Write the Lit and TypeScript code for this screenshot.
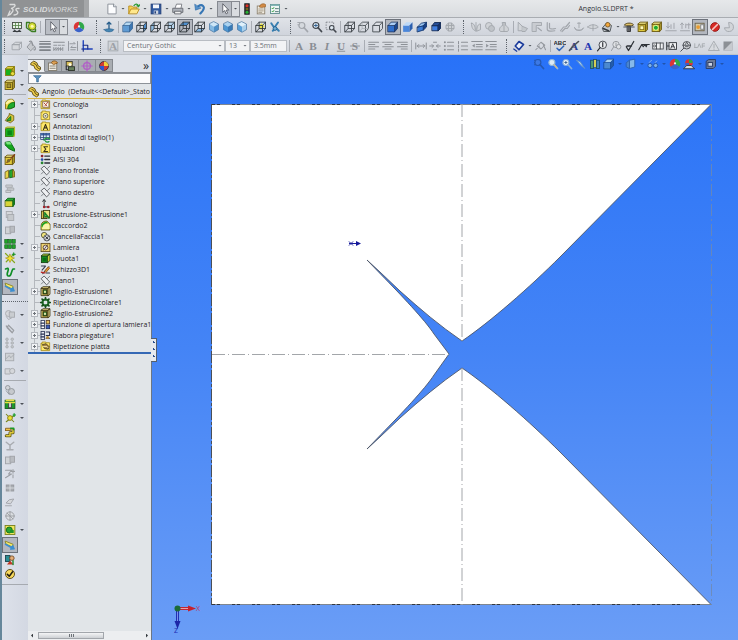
import { LitElement, html, svg, css, nothing, type SVGTemplateResult } from "lit";
import { customElement, property, state } from "lit/decorators.js";
import { classMap } from "lit/directives/class-map.js";

/* ---------- icon drawing helpers (16 x 16 grid) ---------- */

const p = (d: string, fill = "none", stroke = "none", w = 1.2) =>
  svg`<path d=${d} fill=${fill} stroke=${stroke} stroke-width=${w} stroke-linejoin="round" stroke-linecap="round"/>`;
const c = (x: number, y: number, r: number, fill = "none", stroke = "none", w = 1.2) =>
  svg`<circle cx=${x} cy=${y} r=${r} fill=${fill} stroke=${stroke} stroke-width=${w}/>`;
const r = (x: number, y: number, w: number, h: number, fill = "none", stroke = "none", sw = 1.2) =>
  svg`<rect x=${x} y=${y} width=${w} height=${h} fill=${fill} stroke=${stroke} stroke-width=${sw}/>`;

const FRONT = "M1.5 6H10V14.5H1.5Z";
const WIRE = "M1.5 6H10V14.5H1.5ZM1.5 6L5.5 1.5H14L10 6M14 1.5V10L10 14.5M5.5 1.5V10H14M5.5 10L1.5 14.5";
const OUTLINE = "M1.5 6H10V14.5H1.5ZM1.5 6L5.5 1.5H14L10 6M14 1.5V10L10 14.5";
const TOPF = "M1.5 6L5.5 1.5H14L10 6Z";
const SIDE = "M10 6L14 1.5V10L10 14.5Z";
const INK = "#2b3136";
const GREY = "#a2a6ac";

const wire = (face: string, fill: string) => svg`${p(face, fill)}${p(WIRE, "none", INK, 1.1)}`;
const solid = (f: string, t: string, s: string, line: string) =>
  svg`${p(FRONT, f)}${p(TOPF, t)}${p(SIDE, s)}${p(OUTLINE, "none", line, 1)}`;
const iso = (t: string, l: string, q: string) =>
  svg`${p("M8 1L14 4L8 7.500L2 4Z", t)}${p("M2 4L8 7.500V15L2 11.500Z", l)}${p("M14 4L8 7.500V15L14 11.500Z", q)}${p("M8 1L14 4V11.500L8 15L2 11.500V4Z", "none", "#3f6f9c", 0.9)}`;
const lens = (col: string, fill: string) => svg`${c(6.5, 6, 4, fill, col, 1.6)}${p("M9.500 9L14 14", "none", col, 2.4)}`;
const lines = (col: string, ls: number[][]) => svg`${ls.map(([y, a, b]) => p(`M${a} ${y}H${b}`, "none", col, 1.500))}`;
const glyph = (t: string, col: string, style = "") =>
  svg`<text x="8" y="13" text-anchor="middle" font-family="Liberation Serif, serif" font-weight="bold" font-size="15" font-style=${style || "normal"} fill=${col}>${t}</text>`;
const greenCube = svg`${r(2, 5, 9, 9, "#19b01c", "#8a7d10")}${p("M2 5L5 2H14L11 5Z", "#e5d640", "#8a7d10")}${p("M11 5L14 2V11L11 14Z", "#b7a91e", "#8a7d10")}`;
const yellowBox = svg`${r(1.5, 4, 10, 10, "#e0c93a", "#6c5a12")}${p("M1.500 4L4 1.500H14L11.500 4Z", "#f7ec8a", "#6c5a12")}${p("M11.500 4L14 1.500V11.500L11.500 14Z", "#a8932a", "#6c5a12")}`;
const folder = svg`${p("M1.500 3.500V14H14V2.500H8.500V1.500H3V3.500Z", "#ffe96a", "#a48a1d")}`;

const ICONS: Record<string, SVGTemplateResult> = {
  blank: svg``,
  newDoc: svg`${p("M3 1.500H10L13.500 5V14.500H3Z", "#fcfdfe", "#8a9097")}${p("M10 1.500V5H13.500", "#dde3ea", "#8a9097")}`,
  open: svg`${p("M1 14V4H5L6.500 5.500H12V8", "#f4cf52", "#b98d20")}${p("M1 14L4 8H15L12 14Z", "#ffe88c", "#b98d20")}${p("M8 3.500C10 0.500 13 1 14 4M12 3.500L14 5L15.500 2.500", "none", "#2c9a34", 1.600)}`,
  save: svg`${r(1.5, 1.5, 13, 13, "#315a9f", "#223f78")}${r(4, 2, 8, 5, "#f2f5fa")}${r(5, 10, 6, 4.5, "#cfd6e2")}${r(6, 11, 2, 3, "#223f78")}`,
  print: svg`${p("M4 7L6 1.500H13L12 7", "#fff", "#777b81")}${p("M1.500 7H14.500V12.500H1.500Z", "#aeb3ba", "#666a70")}${p("M4 11H12V14.500H4Z", "#f1f1f1", "#666a70")}`,
  undo: svg`${p("M5.500 4.500C11 0.500 15.500 5 11.500 10.500L8.500 14", "none", "#3676b5", 2.800)}${p("M1 2L2 9.500L9 7Z", "#5591c9", "#2f69a5", 0.800)}`,
  cursor: svg`${p("M5 1.500V12.500L7.500 10L9.500 14.500L11.500 13.500L9.500 9.500H12.500Z", "#fff", "#5b5f66")}`,
  light: svg`${r(5, 1, 6, 14, "#333", "#222")}${c(8, 3.8, 2, "#e02f24")}${c(8, 8, 1.8, "#73651c")}${c(8, 12.2, 2, "#25b233")}`,
  props: svg`${r(3, 4, 10, 10.5, "#f3eee2", "#8d8371")}${p("M5 8H11M5 10.500H11M5 12.500H9", "none", "#8d8371", 1)}${p("M6 5C6 1 12 0 14 2V5L9 6Z", "#d28a45", "#8e5720", 0.800)}`,
  options: svg`${r(2, 2, 12, 12, "#eef6f4", "#5d8d8d")}${r(2, 2, 12, 2, "#82b5b5")}${p("M4 7L5 8L6.500 6M4 11L5 12L6.500 10", "none", "#2d9a3a", 1.200)}${p("M8.500 7.500H12.500M8.500 11.500H12.500", "none", "#4a6f6f")}`,
  sketch: svg`${r(2, 2, 12, 8, "#e9f3e6", "#454a44")}${p("M2 6H14M6 2V10M10 2V10", "none", "#4c7d3f", 1)}${p("M3 14H13M4 12L8 14.500L12 12", "none", "#383c40", 1.400)}`,
  dimension: svg`${c(9.5, 7, 5, "#d3de35", "#596b16")}${p("M2 2H6M2 2V9L9 14H14V11", "none", "#3b7e22", 1.800)}${c(9.5, 7, 2, "#fff8b0")}`,
  wheel: svg`${p("M8 8V1A7 7 0 0 1 14.060 11.500Z", "#2fa84a")}${p("M8 8L14.060 11.500A7 7 0 0 1 1.940 11.500Z", "#3a62c9")}${p("M8 8L1.940 11.500A7 7 0 0 1 8 1Z", "#d93636")}${c(8, 7, 1.5, "#f0f0f0")}`,
  anchor: svg`${p("M8 2V12M5.500 4L8 1.500L10.500 4", "none", "#2a5f8c", 1.800)}${p("M1.500 11.500C4 15.500 12 15.500 14.500 11.500C11 10 5 10 1.500 11.500Z", "#4787b5", "#2a5f8c", 0.800)}`,
  cubeSolid: solid("#5f9bd4", "#b6d8f1", "#3c77b3", "#2f5f92"),
  wireRight: wire(SIDE, "#4b8ac8"),
  wireLeft: wire("M5.500 1.500V10L1.500 14.500V6Z", "#8fbce2"),
  wireBack: wire("M5.500 1.500H14V10H5.500Z", "#b5d2ea"),
  wireTop: wire(TOPF, "#4d8fcf"),
  wireBottom: wire("M1.500 14.500L5.500 10H14L10 14.500Z", "#87b6df"),
  isoA: iso("#cde6f7", "#85b9e2", "#4e8fc7"),
  isoB: iso("#aad2f0", "#4d96d2", "#3879b6"),
  isoC: iso("#e0f1fb", "#5aa0d8", "#aad0ec"),
  section: svg`${wire("M5 6L9 3L13 7L8 12Z", "#e6dd43")}`,
  viewer: svg`${p("M3 3L7 9L12 2M5 13L9 9L13 13", "none", "#377fb1", 2.600)}${c(8, 10, 2.5, "#70b0d6", "#24608e")}`,
  zoomGrey: svg`${lens(GREY, "#d5d9de")}${p("M1 2H4M1 5H3", "none", GREY)}`,
  zoomFit: svg`${lens("#42474e", "#dbe8f2")}${p("M4.500 6H8.500M6.500 4V8", "none", "#2d5c8e")}`,
  zoomArea: svg`<rect x="1.500" y="1.500" width="10" height="10" fill="none" stroke="#6b7077" stroke-dasharray="2 1.500"/>${c(9, 9, 3, "#dfe9f1", "#42474e", 1.4)}${p("M11 11L14.500 14.500", "none", "#42474e", 2)}`,
  wireAll: svg`${p(WIRE, "none", "#3f454b", 1.2)}`,
  wireHid: svg`${p(OUTLINE, "none", "#4c5258", 1.2)}${p("M5.500 2V10H13.500M5.500 10L2 14", "none", "#a3a8ae", 0.900)}`,
  wireOut: svg`${p(OUTLINE, "none", "#51575e", 1.3)}`,
  shadeEdge: solid("#2f6ecb", "#a9cdf6", "#18468f", "#152f5e"),
  shade: svg`${p(FRONT, "#4a86da")}${p(TOPF, "#bcd8f7")}${p(SIDE, "#2b5fae")}`,
  shadow: svg`${p("M2 8L10 6V12L2 14.500Z", "#3b7bd5", "#163a73")}${p("M2 8L7 3L14 1.500L10 6Z", "#9cc6f1", "#163a73")}${p("M10 6L14 1.500V8L10 12Z", "#173f85", "#163a73")}`,
  shadeBox: svg`${p("M3 6H11V13H3Z", "#3e7de0", "#122a56")}${p("M3 6L6 2H14L11 6Z", "#274e96", "#122a56")}${p("M11 6L14 2V10L11 13Z", "#122f6c", "#122a56")}`,
  greyMesh: svg`${c(8, 8, 5.5, "#cfd2d6", GREY)}${p("M3 6H13M3 10H13M6 3V13M10 3V13", "none", GREY)}`,
  greyWings: svg`${p("M2 3C5 3 7 6 7 13C4 12 2 9 2 3ZM9 13C9 7 11 4 14 4V11Z", "#d2d5d9", GREY)}${p("M8 2V14", "none", GREY)}`,
  greyBall: svg`${c(6.5, 6.5, 4.5, "#d0d3d7", GREY)}${c(10, 10, 4, "#bfc3c8", GREY)}`,
  greyVase: svg`${p("M6 2H10V6C15 8 15 14 12 14H4C1 14 1 8 6 6Z", "#cfd2d6", GREY)}${p("M8 2V14", "none", GREY)}`,
  greyFlange: svg`${p("M2 2L7 7V13H2Z", "#d2d5d9", GREY)}${p("M7 7L14 10L11 14H7", "#c4c8cc", GREY)}`,
  greyCorner: svg`${p("M2 2H14V6H7V14H2Z", "#c9ccd1", GREY)}${p("M9 9L14 13", "none", GREY, 1.500)}`,
  greyHem: svg`${p("M3 2V11C3 14 9 14 13 13M6 3V9C6 11 10 11 14 10", "none", GREY, 1.600)}`,
  greyJog: svg`${p("M2 13L6 8H9L14 2M4 14L8 10H11L14 6", "none", GREY, 1.600)}`,
  greyForm: svg`${p("M8 2V9M6 3H10M2 9C3 14 13 14 14 9L11 12H5Z", "#cfd2d6", GREY)}`,
  greyEye: svg`${p("M1 8C4 4 12 4 15 8C12 11 4 11 1 8Z", "#d2d5d9", GREY)}${p("M8 5V13", "none", GREY)}`,
  hole: svg`${p("M2 9L8 2L14 6L12 14H4Z", "#c5c9cd", "#4e5358")}${c(9, 5, 3, "#f4a83c", "#7a5a28")}${p("M3 10L10 13", "none", "#363b40", 2)}`,
  hammer: svg`${p("M2 5C4 2 12 2 14 5L12 6.500H4Z", "#e0c26b", "#4c4020")}${p("M6 7H10V14H6Z", "#5f6164", "#303235")}${p("M1 8H15", "none", "#52575c", 1.400)}`,
  yellowA: svg`${yellowBox}${r(4, 6.5, 5, 5, "#fff9b8", "#7a681b", 1)}`,
  yellowB: svg`${yellowBox}${c(6.5, 9, 3.3, "#21ab2c", "#e8f7a0")}`,
  greyDown: svg`${p("M4 2V9M2 7L4 9.500L6 7M8 5V10M12 3V10M1 13H15", "none", GREY, 1.300)}`,
  greyUp: svg`${p("M4 10V3M2 5L4 2.500L6 5M9 9V4M13 10V3M10 5H15M2 13H14", "none", GREY, 1.300)}`,
  unfold: svg`${r(1.5, 3, 12, 10, "#d5c9a6", "#69614d")}${c(5.5, 8, 2.5, "#e99b2f")}${r(9, 5, 4, 6, "#f2f3f5", "#7b7f84")}`,
  forbid: svg`${c(8, 8, 5.8, "#d92a25", "#8e1411")}${p("M4.500 11.500L11.500 4.500", "none", "#f5c7c2", 2)}`,
  greyPie: svg`${p("M8 2A6 6 0 1 1 2 9H8Z", "#d2d5d9", GREY)}`,
  orange: svg`${r(3, 3, 11, 10, "#f0a447", "#8e5a20")}`,
  greyCube: svg`${p("M2 6L6 3H14L11 6ZM2 6H11V13H2Z", "#d5d8dc", GREY)}${p("M11 6L14 3V10L11 13", "none", GREY)}`,
  greyBucket: svg`${p("M3 9L8 3L13 9L8 14Z", "#c7cace", "#8e9297")}${p("M6 2C9 0 10 4 10 7M13 9C15 12 13 14 12 13", "none", "#8e9297", 1.500)}`,
  weight: lines("#7e8389", [[2, 1, 15], [5, 1, 15], [5.5, 1, 15], [9, 1, 15], [9.7, 1, 15], [13, 1, 15], [14, 1, 15]]),
  dash: svg`${lines("#8a8e94", [[3, 1, 15]])}${p("M1 7H5M7 7H10M12 7H15M1 10V14L4 10V14L7 10V14L10 10V14L13 10V14", "none", "#8a8e94")}`,
  swap: svg`${p("M2 2V14M14 2V14M4 5H11L9 3M12 10H5L7 8M5 13H11", "none", "#94989e", 1.300)}`,
  colorL: svg`${p("M3 1V12H15", "none", "#1c3fbb", 1.800)}${p("M3 7H9V12M1 12H3V15", "none", "#1c2f86", 1.500)}`,
  noteA: svg`${r(1.5, 1.5, 13, 13, "#d0d4d9", "#a4a8ad")}${glyph("A", "#9da1a7")}`,
  bold: glyph("B", "#898d93"), fontA: glyph("A", "#898d93"), italic: glyph("I", "#898d93", "italic"),
  under: svg`${glyph("U", "#898d93")}${p("M3 15H13", "none", "#898d93")}`,
  strike: svg`${glyph("S", "#898d93")}${p("M2 8H14", "none", "#898d93")}`,
  alignL: lines("#8d9197", [[3, 1, 14], [6, 1, 9], [9, 1, 14], [12, 1, 9]]),
  alignC: lines("#8d9197", [[3, 1, 15], [6, 4, 12], [9, 1, 15], [12, 4, 12]]),
  alignR: lines("#8d9197", [[3, 2, 15], [6, 7, 15], [9, 2, 15], [12, 7, 15]]),
  widthA: svg`${p("M1 4V12M15 4V12M3 8H13M5 6L3 8L5 10M11 6L13 8L11 10", "none", "#8d9197", 1.300)}`,
  widthB: svg`${p("M1 8H6M10 8H15M4 6L6 8L4 10M12 6L10 8L12 10M6 3H10M6 13H10", "none", "#8d9197", 1.300)}`,
  bullets: svg`${c(2.5, 3, 1.3, "#8d9197")}${c(2.5, 8, 1.3, "#8d9197")}${c(2.5, 13, 1.3, "#8d9197")}${lines("#8d9197", [[3, 6, 14], [8, 6, 14], [13, 6, 14]])}`,
  numbers: svg`${p("M2 2V5M2 7V10M2 12V15", "none", "#8d9197", 1.300)}${lines("#8d9197", [[3, 6, 14], [8, 6, 14], [13, 6, 14]])}`,
  outdent: svg`${lines("#8d9197", [[2, 1, 15], [6, 7, 15], [9, 7, 15], [13, 1, 15]])}${p("M5 5L1.500 7.500L5 10Z", "#8d9197")}`,
  indent: svg`${lines("#8d9197", [[2, 1, 15], [6, 7, 15], [9, 7, 15], [13, 1, 15]])}${p("M1.500 5L5 7.500L1.500 10Z", "#8d9197")}`,
  smartDim: svg`${p("M3 8L8 2L14 6L8 13Z", "#e9eef8", "#1b3b9b", 2.200)}${p("M1 12L5 15", "none", "#1b3b9b", 1.600)}`,
  greyDim: svg`${p("M3 8L8 3L13 7L8 12ZM1 13L6 8M11 6L14 13", "none", "#94989e", 1.400)}`,
  abc: svg`<text x="8" y="7" text-anchor="middle" font-family="Liberation Sans, sans-serif" font-weight="bold" font-size="8" fill="#26292d">ABC</text>${p("M4 11L7 14L13 8", "none", "#2f64b7", 2)}`,
  brushA: svg`${glyph("A", "#2a3f92")}${p("M2 14L6 9L14 2", "none", "#4d5157", 2.200)}`,
  blueA: glyph("A", "#1d35b2"),
  balloon: svg`${c(9, 6.5, 5, "#eceef1", "#3b4046")}${p("M9 3.500V9M5.500 10L2 14.500", "none", "#24282d", 1.500)}`,
  autoBalloon: svg`${c(8, 6, 4.2, "#e1e3e6", "#91959b")}${c(11.5, 9, 3, "#e1e3e6", "#91959b")}${p("M5 9L2 14M8 4V8", "none", "#91959b")}`,
  finish: svg`${p("M3 9L6 14L13 2M4 8H10", "none", "#2d3137", 1.700)}`,
  weld: svg`${p("M1 13L5 6L7 9L9 6L11 9L12 6M5 6H15", "none", "#2d3137", 1.500)}`,
  tol: svg`${r(1, 4, 14, 8, "#f0f1f3", "#45494f")}${p("M6 4V12M11 4V12", "none", "#45494f")}${c(3.5, 8, 1.4, "none", "#45494f", 1)}`,
  datum: svg`${r(4, 3.5, 10, 9, "#f0f1f3", "#33373c")}${p("M1 3V13M1 8H4", "none", "#33373c", 1.500)}${p("M6.500 11L9 5L11.500 11M7.500 9H10.500", "none", "#33373c")}`,
  target: svg`${c(9, 7, 5, "#eceef1", "#3d4248")}${p("M4 7H14M5 11L1 15M7 6L9 3L11 6M7 9H11", "none", "#3d4248")}`,
  greyText: svg`${p("M1 10V5M1 10H4M5 10L7 5L9 10M11 10V5H14M11 8H14", "none", "#a5a9ae")}`,
  greyTri: svg`${p("M8 2L15 14H1Z", "#d8dbdf", "#a5a9ae")}${p("M8 6V10M8 12V12.500", "none", "#a5a9ae")}`,
  hatch: svg`${r(2, 2, 12, 12, "#8c9095")}${p("M2 14L14 2V14Z", "#c7cacf")}`,

  /* left strip */
  boss: svg`${greenCube}${c(11.5, 11.5, 2.8, "#e9dc3d", "#78720d")}`,
  boxCut: svg`${yellowBox}${r(4, 6.5, 5, 5, "#a6963a", "#5d4d0c", 1)}`,
  fillet: svg`${p("M2 14V7C3 2 8 1 12 2L14 5V12L9 14Z", "#e7d23c", "#81711a")}${p("M5 14C5 8 9 6 14 6V12L9 14Z", "#20aa2b", "#0f6c18")}${p("M2 7C4 3 8 2 11 2L13 5C8 5 5 7 4 9Z", "#fbf3a6")}`,
  rib: svg`${p("M2 11L7 4V2L13 5V11L9 14Z", "#d9c53d", "#75661a")}${p("M4 11L9 6V11Z", "#31b23c", "#107018")}`,
  shell: svg`${r(2, 3, 11, 11, "#1bb320", "#3d7a12")}${r(4.5, 6, 6, 6, "#0c8414")}${p("M2 3L4 1.500H14V12L13 14", "none", "#b0bb22", 1.500)}`,
  draft: svg`${p("M2 3L8 2L14 12V15L7 12L2 7Z", "#14a71d", "#0b6412")}${p("M2 3L8 2L10 6L4 6Z", "#7ce47f")}`,
  wizard: svg`${yellowBox}${p("M10 5L14 1M4 11L9 7", "none", "#84401a", 2)}${c(6, 9, 2.2, "#7d6b2b")}`,
  loft: svg`${p("M2 5L6 3V13L2 14Z", "#e6d545", "#77681b")}${p("M8 3L12 2V12L8 13Z", "#24a82e", "#0e6518")}${p("M12 2L14 5V12L12 12Z", "#c2b12b", "#77681b")}`,
  greyStack: svg`${p("M3 4H11V7H3ZM5 8H13V11H5ZM3 11H9V14H3Z", "#cdd0d4", "#a6a9ae")}`,
  dome: svg`${p("M2 6H12V14H2Z", "#d8d438", "#6b7216")}${p("M2 6L5 3H14L12 6Z", "#28ab33", "#0e6518")}${p("M12 6L14 3V11L12 14Z", "#138a1d", "#0e6518")}`,
  greyMirror: svg`${r(3, 2, 8, 8, "#d5d7db", "#a6a9ae")}${r(5, 6, 8, 8, "#c5c8cc", "#a6a9ae")}`,
  pattern: svg`${[1, 6, 11].map((x) => [2, 9].map((y) => r(x, y, 4, 5, "#1fa629", "#0d5914", 0.8)))}`,
  refGeo: svg`${p("M2 2L14 14M13 3L3 13", "none", "#85a81d", 1.600)}${p("M8 3L10 7L14 8L10 10L8 14L6 10L2 8L6 7Z", "#f2e12e", "#a08e13", 0.800)}${p("M11 3H15M13 1V5", "none", "#129022", 1.400)}`,
  spline: svg`${p("M2 4L5 3C8 5 2 10 5 13C10 15 9 8 12 4H14", "none", "#0f8d26", 2.200)}`,
  instant: svg`${p("M2 3L12 7V11L3 7Z", "#f3ea6e", "#8b8524")}${p("M2 7L11 12M9 13.500L13.500 13L11.500 9Z", "#3c8ed0", "#3c8ed0", 2)}`,
  greyCopy: svg`${c(6, 6, 4, "#d5d7db", "#a6a9ae")}${r(7, 4, 7, 7, "#c9ccd0", "#a6a9ae")}${p("M3 10L6 14L10 12", "none", "#a6a9ae")}`,
  greyClip: svg`${p("M3 4L11 13L13 10L6 3L4 6L10 12", "none", "#9b9ea3", 1.600)}`,
  greyDots: svg`${[4, 11].map((x) => [3, 8, 13].map((y) => c(x, y, 1.7, "#c2c5c9", "#a6a9ae", 1)))}`,
  greyBox: svg`${r(2, 3, 11, 10, "#cfd2d6", "#a6a9ae")}${p("M2 11L7 6L9 9L13 5", "none", "#a6a9ae")}`,
  greyBolt: svg`${p("M2 5H8L11 8L8 12H2Z", "#d5d7db", "#a6a9ae")}${c(11, 8, 3.5, "#d5d7db", "#a6a9ae")}`,
  greyGear: svg`${c(5, 5, 3, "#d1d4d8", "#8f9499")}${c(10, 10, 4, "#c6c9cd", "#8f9499")}${p("M3 9L7 14", "none", "#8f9499")}`,
  mould: svg`${r(1.5, 3, 13, 11, "#1c9b2a", "#16591d")}${r(6, 5, 4, 8, "#c7cdd1", "#444")}${p("M2 6H14M3 3H13", "none", "#e6dd45", 1.800)}`,
  planeStar: svg`${p("M3 3L13 13M13 5L3 13", "none", "#79871a", 1.400)}${c(8, 8, 3.2, "#ece134", "#877b12")}${p("M12 4H15.500M13.500 2V6", "none", "#119a24", 1.500)}`,
  route: svg`${p("M2 6V3H9V6H2", "#ecc24a", "#8a611b")}${p("M3 13H8V9H12V5", "none", "#5c5412", 4)}${p("M3 13H8V9H12V5", "none", "#e0cb3c", 2)}${p("M9 3H13V5", "none", "#1c9927", 2)}`,
  greyBranch: svg`${p("M3 3L8 7V13M13 3L8 7M4 13H12", "none", "#a9acb1", 2)}`,
  greySheet: svg`${r(2, 4, 7, 9, "#d0d3d7", "#a0a3a8")}${r(8, 3, 6, 8, "#b9bcc1", "#a0a3a8")}`,
  greyAdd: svg`${p("M2 3H10L6 8H10L2 13M12 2V7M10 4.500H14M12 9V13", "none", "#9c9fa4", 1.400)}`,
  greyFill: svg`${r(3, 4, 10, 8, "#a9acb1", "#96999e")}${p("M8 2V14M2 8H14", "none", "#d9dce0")}`,
  greyEdge: svg`${p("M2 13H10M3 9L7 5L13 4L9 10Z", "#d5d7db", "#a0a3a8")}`,
  greyGlobe: svg`${c(8, 8, 5.5, "#dadde1", "#9b9ea3")}${p("M2 8H14M8 2V14M4 4L12 12", "none", "#9b9ea3")}`,
  sketchGreen: svg`${r(1.5, 2, 13, 12, "#efe65b", "#77811b")}${c(7, 8, 4, "#29a632", "#126a1b")}${p("M8 8H13V12H8Z", "#20932a")}`,
  person: svg`${r(2, 2, 6, 8, "#2a8c93", "#1c4550")}${c(10.5, 5.5, 3, "#e3ad77", "#794c25")}${p("M4 14L8 9L13 14Z", "#c23824")}${p("M12 9V14", "none", "#2b8c38", 2)}`,
  check: svg`${c(8, 8, 6, "#f8d95d", "#54430f")}${p("M4.500 8.500L7 11L11.500 5", "none", "#1f1c12", 2)}`,

  /* panel tabs and tree */
  part: svg`${p("M1.500 4L5 1.500L9 3.500L11 8L14 9.500V12.500L11.500 14.500L7 12L5 7.500L1.500 6.500Z", "#f0cf4a", "#574612")}${p("M5 4.500L8 6L10 10.500L13 12", "none", "#574612")}`,
  display: svg`${r(2, 4, 11, 10, "#f3efe6", "#7e786b")}${p("M4 8H11M4 11H11", "none", "#7e786b")}${p("M6 3C8 0 13 1 14 4L9 6Z", "#dfa254", "#87571d")}`,
  config: svg`${r(3, 2, 8, 6, "#d6bd56", "#3b3c33")}${r(6, 9, 8, 5, "#66805b", "#2c3328")}${p("M3 8V13H6", "none", "#2c2f33", 1.500)}${c(8, 6, 2, "#fffbe0")}`,
  crosshair: svg`${c(8, 8, 4.5, "none", "#b25fc7", 1.8)}${p("M8 1V15M1 8H15", "none", "#b25fc7", 1.500)}`,
  ball: svg`${c(8, 8, 6, "#d13b34", "#26282e", 1)}${p("M8 8L8 2A6 6 0 0 1 14 8Z", "#f3cf3a")}${p("M2 8H8V14A6 6 0 0 1 2 8Z", "#3457c9")}`,
  filter: svg`${p("M1.500 3H14.500L9.500 8.500V14H6.500V8.500Z", "#5d93bf", "#2d628f")}`,
  history: svg`${folder}${r(4, 4, 9, 8, "#fffceb", "#7e5b51")}${p("M6 6L10 10M11 5L7 10", "none", "#b0483d", 1.400)}`,
  sensor: svg`${folder}${c(8, 8.5, 3.5, "#f8f5df", "#5e5a45")}${c(8, 8.5, 1.4, "#77724e")}`,
  annot: svg`${folder}${p("M5 12.500L8 5L11 12.500M6.500 10H9.500", "none", "#3b341a", 1.600)}`,
  equation: svg`${folder}${p("M11 5.500H5.500L8.500 9L5.500 12.500H11", "none", "#3b341a", 1.500)}`,
  cutlist: svg`${r(1, 2, 13, 9, "#e2eefb", "#324b79")}${r(1, 2, 13, 3, "#4067a8")}${p("M1 8H14M5 2V11M9 2V11", "none", "#324b79")}${p("M6 12C7 9 11 8 14 10M13 14C10 15.500 8 14 8 13", "none", "#289a4a", 2)}`,
  material: svg`${c(3, 3, 2, "#8e2029")}${c(3, 8, 2, "#284ba5")}${c(3, 13, 2, "#278431")}${p("M7 3H14M7 8H14M7 13H14", "none", "#2b2e38", 2)}`,
  plane: svg`${p("M2 5L6 1.500L14 10L10 14Z", "#eef0f2", "#4a4e53")}${p("M2 13L5 10M11 5L14 2", "none", "#6f7379")}`,
  origin: svg`${p("M6 13V4M6 13H13M4 5L6 2L8 5", "none", "#2a2d31", 1.400)}${c(6, 13, 1.8, "#a3222b")}${c(12, 13, 1.8, "#a3222b")}`,
  extrude: svg`${r(2, 3, 8, 11, "#d7c450", "#3a340f")}${r(5, 2, 9, 11, "#eee282", "#3a340f")}${p("M7 5V11H12M8 7L13 13", "none", "#17842a", 2)}`,
  round: svg`${p("M1.500 14V8C2 3 6 1.500 10 1.500L14.500 6V14Z", "#f4e34d", "#504b16")}${p("M3 13C3 7 7 5 12 5.500L14 8V13Z", "#f9f4ab")}${p("M2 9C3 4 6 2.500 10 2.500L12 5C8 4 4 7 3.500 11Z", "#19a02a")}`,
  delFace: svg`${c(6, 6, 4, "#efe37b", "#47452d")}${c(10, 10, 4.5, "#d5d7db", "#3c3f44")}${p("M8 8L12 12M12 8L8 12", "none", "#2b2e33", 1.400)}`,
  sheet: svg`${r(1.5, 2, 13, 12, "#f1d671", "#584319")}${c(8, 8, 3.5, "#e2e0e2", "#54392a")}${p("M5 12L11 4", "none", "#54392a")}`,
  shellT: svg`${r(2, 4, 9, 10, "#15901f", "#173d12")}${p("M2 4L5 1.500H14.500L11 4ZM11 4L14.500 1.500V11L11 14Z", "#c3d13a", "#173d12")}${r(4, 7, 5, 5, "#0a6d14")}`,
  sketch3d: svg`${p("M2 3H8L3 9M4 14L13 4M9 13H14", "none", "#353a4c", 1.500)}${p("M7 10L12 4L14 6L9 12Z", "#e79b32", "#8c501b")}${p("M2 12L7 13", "none", "#bc2b29", 2)}`,
  cut: svg`${p("M2 3H12V14H2Z", "#c9b551", "#3b3213")}${p("M2 3L4.500 1H14.500L12 3ZM12 3L14.500 1V12L12 14Z", "#efe187", "#3b3213")}${r(4.5, 5.5, 5.5, 6, "#33892f", "#24240f")}${r(6, 7, 2.5, 3, "#f5f0ba")}`,
  circular: svg`${c(8, 8, 4.5, "none", "#1d7d2a", 3)}${p("M8 1V4M8 12V15M1 8H4M12 8H15M3 3L5 5M11 11L13 13M13 3L11 5M5 11L3 13", "none", "#174d1c", 2.400)}`,
  openSheet: svg`${r(1.5, 2, 5, 12, "#fff", "#283251")}${p("M1.500 6H6M1.500 10H6", "none", "#283251", 1.500)}${r(9, 2, 5, 5, "#e5c15c", "#5b3d21")}${r(9, 9, 5, 5, "#3c5cb8", "#222f5e")}`,
  bends: svg`${r(1.5, 2, 5, 12, "#e7ebf4", "#283251")}${p("M1.500 6H6M1.500 10H6M9 3H14V8H9M9 12H14", "none", "#283251", 1.600)}${c(11, 11, 2.2, "#b98b38")}`,
  flat: svg`${folder}${p("M4 5L9 4L13 8L12 12L7 11Z", "#ab8743", "#3a2f16")}${p("M5 8L10 8L12 10", "none", "#f7edbb")}`,

  /* heads-up view bar */
  hudLens0: svg`${p("M2 3H10M2 6H8M2 9H10", "none", "#2757a8", 1.500)}${lens("#2459b5", "#3c79e6")}`,
  hudLens1: svg`${lens("#8fb7dc", "#dceaf5")}${p("M9.500 9L13 13", "none", "#c9b68f", 2)}`,
  hudLens2: svg`${lens("#86aeda", "#edf4fa")}${p("M5 6H8M6.500 4.500V7.500", "none", "#335d92")}`,
  hudPen: svg`${p("M2 3L7 5L13 14L8 10Z", "#a9cff0", "#5c8fc9")}`,
  hudSection: svg`${r(2, 3, 4, 11, "#4e9a72", "#205070")}${r(6, 2, 4, 11, "#d5cf53", "#205070")}${r(10, 3, 4, 11, "#3e80ba", "#205070")}`,
  hudCube: solid("#4b89cf", "#a8d0f2", "#235ba9", "#1a4c94"),
  hudStyle: svg`${p("M6 3L13 1.500V12L6 14Z", "#86b9ea", "#2d62b0")}${p("M2 6L6 3V14L2 12Z", "#4a84cc", "#2d62b0")}`,
  hudGlasses: svg`${c(4, 10, 2.8, "#7db1e8", "#2453a0")}${c(11.5, 10, 2.8, "#7db1e8", "#2453a0")}${p("M3 6L6 3M11 6L13 4", "none", "#8fb7e4")}`,
  hudScene: svg`${c(8, 6.5, 5, "#d93636")}${p("M8 6.500V1.500A5 5 0 0 1 13 6.500Z", "#2fa84a")}${p("M3 6.500H8V11.500A5 5 0 0 1 3 6.500Z", "#3a62c9")}${p("M1 14L5 10H11L15 14Z", "#d7dbe0", "#30343a")}`,
  hudCam: svg`${p("M2 4L5 2H14V11L11 14H2Z", "#6b7a97", "#2a3b61")}${r(4, 6, 6, 5, "#c9d3e4", "#2a3b61")}`,
};

type Tool = string; // "name" | "name*" pressed | "name+" with menu | "|" separator | "v" drop arrow | ":" grip

const TITLE_TOOLS: Tool[] = ["newDoc", "v", "open", "v", "save", "v", "print", "v", "undo", "v"];
const TITLE_TOOLS_END: Tool[] = ["light", "props", "options", "v"];
const ROW2_SKETCH: Tool[] = [":", "sketch", "dimension", "|"];
const ROW2_COLOR: Tool[] = ["wheel"];
const ROW2_VIEWS: Tool[] = [":", "anchor", "|", "cubeSolid", "wireRight", "wireLeft", "wireBack", "wireTop*", "wireBottom", "isoA", "isoB", "isoC", "|", "section", "viewer"];
const ROW2_ZOOM: Tool[] = [":", "zoomGrey", "zoomFit", "zoomArea", "|", "wireAll", "wireHid", "wireOut", "shadeEdge*", "shade", "shadow", "shadeBox", "greyMesh"];
const ROW2_SHEET: Tool[] = [":", "greyWings", "greyBall", "greyVase", "|", "greyFlange", "greyCorner", "greyHem", "greyJog", "greyForm", "greyEye", "hole", "v", "hammer", "yellowA", "yellowB", "greyDown", "greyUp", "unfold*", "forbid", "greyPie", "orange"];
const ROW3_LINE: Tool[] = [":", "greyCube", "greyBucket", "weight", "dash", "swap", "colorL"];
const ROW3_NOTE: Tool[] = [":", "noteA"];
const ROW3_FORMAT: Tool[] = ["|", "fontA", "bold", "italic", "under", "strike", "|", "alignL", "alignC", "alignR", "|", "widthA", "widthB", "bullets", "numbers", "outdent", "indent"];
const ROW3_ANNOT: Tool[] = [":", "smartDim", "v", "greyDim", "|", "abc", "brushA", "blueA", "balloon", "autoBalloon", "finish", "weld", "tol", "datum", "target", "greyText", "greyTri", "hatch"];
const HUD: Tool[] = ["hudLens0", "hudLens1", "hudLens2", "hudPen", "hudSection", "hudCube", "v", "hudStyle", "v", "hudGlasses", "v", "wheel", "hudScene", "v", "hudCam", "v"];
const SIDE_TOOLS: Tool[] = [
  "boss+", "boxCut+", "|", "fillet+", "rib", "shell", "draft", "wizard", "loft", "greyStack", "dome", "greyMirror", "greySheet",
  "pattern+", "refGeo+", "spline+", "instant*", ":", "greyCopy+", "greyClip", "greyDots+", "greyBox", "greyBolt+", "|",
  "greyGear", "mould+", "planeStar+", "route", "greyBranch", "greySheet", "greyAdd", "greyFill", "greyEdge", "greyGlobe",
  "sketchGreen+", "instant*", "person", "check",
];

interface Node { label: string; icon: string; open?: boolean }
const TREE: Node[] = [
  { label: "Cronologia", icon: "history", open: true },
  { label: "Sensori", icon: "sensor" },
  { label: "Annotazioni", icon: "annot", open: true },
  { label: "Distinta di taglio(1)", icon: "cutlist", open: true },
  { label: "Equazioni", icon: "equation", open: true },
  { label: "AISI 304", icon: "material" },
  { label: "Piano frontale", icon: "plane" },
  { label: "Piano superiore", icon: "plane" },
  { label: "Piano destro", icon: "plane" },
  { label: "Origine", icon: "origin" },
  { label: "Estrusione-Estrusione1", icon: "extrude", open: true },
  { label: "Raccordo2", icon: "round" },
  { label: "CancellaFaccia1", icon: "delFace" },
  { label: "Lamiera", icon: "sheet", open: true },
  { label: "Svuota1", icon: "shellT" },
  { label: "Schizzo3D1", icon: "sketch3d" },
  { label: "Piano1", icon: "plane" },
  { label: "Taglio-Estrusione1", icon: "cut", open: true },
  { label: "RipetizioneCircolare1", icon: "circular" },
  { label: "Taglio-Estrusione2", icon: "cut", open: true },
  { label: "Funzione di apertura lamiera1", icon: "openSheet", open: true },
  { label: "Elabora piegature1", icon: "bends", open: true },
  { label: "Ripetizione piatta", icon: "flat", open: true },
];

@customElement("cad-icon")
class CadIcon extends LitElement {
  @property() name = "blank";
  static styles = css`
    :host { display: block; width: 12px; height: 12px; flex: none; }
    .svg { display: block; width: 100%; height: 100%; }
  `;
  render() {
    return html`<svg class="svg" viewBox="0 0 16 16" aria-hidden="true">${ICONS[this.name] ?? nothing}</svg>`;
  }
}

@customElement("tool-strip")
class ToolStrip extends LitElement {
  @property({ attribute: false }) tools: Tool[] = [];
  static styles = css`
    :host { display: flex; align-items: center; flex: none; }
    .tool { width: 14px; height: 16px; flex: none; padding: 0; border: 0; background: none; display: grid; place-items: center; }
    .pressed { width: 16px; background: #b3b7bf; border: 1px solid #6d727b; }
    .drop { width: 8px; height: 16px; flex: none; padding: 0; border: 0; background: none; display: grid; place-items: center; }
    .arrow { display: block; width: 4px; height: 2px; background: var(--arrow, #4b5057); clip-path: polygon(0 0, 100% 0, 50% 100%); }
    .sep { width: 1px; height: 12px; margin: 0 2px; background: #a9adb4; flex: none; }
    .grip { width: 0; height: 14px; margin: 0 5px 0 2px; border-left: 1px dotted #5d636b; flex: none; }
  `;
  render() {
    return this.tools.map((t) => {
      if (t === "|") return html`<span class="sep"></span>`;
      if (t === ":") return html`<span class="grip"></span>`;
      if (t === "v") return html`<button class="drop" aria-label="more"><span class="arrow"></span></button>`;
      const pressed = t.endsWith("*");
      const name = pressed ? t.slice(0, -1) : t;
      return html`<button class=${classMap({ tool: true, pressed })} aria-label=${name}><cad-icon name=${name}></cad-icon></button>`;
    });
  }
}

@customElement("feature-tree")
class FeatureTree extends LitElement {
  static styles = css`
    :host { display: block; font: 7px/11px "Open Sans", "Noto Sans", sans-serif; color: #1f2226; }
    .root { display: flex; align-items: center; gap: 2px; height: 13px; border-bottom: 1px solid #d8b54a; white-space: nowrap; overflow: hidden; }
    .gap { white-space: pre; }
    .list { list-style: none; margin: 0; padding: 0; border-bottom: 2px solid #3468b4; }
    .item { display: grid; grid-template-columns: 12px 12px 1fr; align-items: center; height: 11px; white-space: nowrap; }
    .branch { position: relative; height: 11px; background: linear-gradient(#b4b8bd, #b4b8bd) 6px 0 / 1px 11px no-repeat, linear-gradient(#b4b8bd, #b4b8bd) 6px 5px / 6px 1px no-repeat; }
    .plus { position: absolute; left: 3px; top: 2px; box-sizing: border-box; width: 7px; height: 7px; padding: 0; border: 1px solid #b4b8be; background: linear-gradient(#6f747a, #6f747a) center / 3px 1px no-repeat, linear-gradient(#6f747a, #6f747a) center / 1px 3px no-repeat, #f2f4f6; }
    .icon { width: 11px; height: 11px; }
    .label { padding-left: 1px; }
  `;
  render() {
    return html`
      <div class="root"><cad-icon name="part"></cad-icon><span class="gap">Angolo  (Default&lt;&lt;Default&gt;_Stato</span></div>
      <ul class="list">
        ${TREE.map((n) => html`<li class="item">
          <span class="branch">${n.open ? html`<button class="plus" aria-label="expand ${n.label}"></button>` : nothing}</span>
          <cad-icon class="icon" name=${n.icon}></cad-icon><span class="label">${n.label}</span>
        </li>`)}
      </ul>`;
  }
}

@customElement("model-view")
class ModelView extends LitElement {
  static styles = css`
    :host { display: block; position: relative; overflow: hidden; background: linear-gradient(#2872f8, #4484f6 50%, #6a9df6); }
    .drawing { display: block; width: 100%; height: 100%; }
    .hud { position: absolute; top: 1px; right: 12px; --arrow: #2154ad; }
  `;
  render() {
    const edges =
      "M711 104.500L560 257C530 287 490 322 462 341C440 326 420 309 400 291L380 272L367 260L381 274.500C400 294 425 320 434 334L449 354L434 375C425 389 400 415 381 434.500L367 449L380 437L400 418C420 400 440 383 462 368C490 387 530 422 560 452L711 604.500";
    const outline = `M212 104.500H711${edges.slice(edges.indexOf("L"))}H212Z`;
    return html`
      <svg class="drawing" viewBox="152 55 586 585" preserveAspectRatio="xMinYMin meet" role="img" aria-label="Flat pattern">
        <path d=${outline} fill="#fff" />
        <path d=${edges} fill="none" stroke="#4d5668" stroke-width="0.9" />
        <path d="M212 104.500H711M212 604.500H711" stroke="#7f868f" fill="none" />
        <path d="M212 104.500H711M212 604.500H711" stroke="#33383f" stroke-dasharray="3 2 3 12" fill="none" />
        <path d="M211.500 104V605" stroke="#4a4f57" stroke-dasharray="12 2 3 2" fill="none" />
        <path d="M711.500 104V605" stroke="#7089ad" stroke-width="0.8" stroke-dasharray="12 3 2 3" fill="none" />
        <path d="M462 104V341M462 368V605M212 354.500H449" stroke="#a3a6aa" stroke-dasharray="13 3 1 3" fill="none" />
        <path d="M349 241.500L353 245.500M353 241.500L349 245.500M349 243.500H356" stroke="#1a1f9c" fill="none" />
        <path d="M356 241L361 243.500L356 246Z" fill="#14189a" />
        <path d="M180 608.500H190" stroke="#c22634" stroke-width="3" />
        <path d="M180 608.500H188" stroke="#e8a0ac" stroke-width="1" />
        <path d="M188 605.500L196 608.500L188 611.500Z" fill="#c7202c" />
        <path d="M177.500 611V623" stroke="#2031b4" stroke-width="3" />
        <path d="M177.500 611V621" stroke="#7d92ea" stroke-width="1" />
        <path d="M174.500 621L177.500 629L180.500 621Z" fill="#1c26a8" />
        <circle cx="177.500" cy="608.500" r="3" fill="#1b6b39" />
        <text x="196" y="611" font-family="Noto Sans, sans-serif" font-size="7" fill="#b5416e">X</text>
        <text x="174" y="633" font-family="Noto Sans, sans-serif" font-size="7" fill="#1f2fb5">Z</text>
      </svg>
      <tool-strip class="hud" .tools=${HUD}></tool-strip>`;
  }
}

@customElement("app-root")
class AppRoot extends LitElement {
  @state() private tab = 0;
  static styles = css`
    :host { display: flex; flex-direction: column; min-height: 100vh; box-sizing: border-box; border-left: 2px solid #66879b; background: #d8dce4; font: 7px/10px "Open Sans", "Noto Sans", sans-serif; color: #30343a; }
    .title { display: flex; align-items: center; height: 18px; box-sizing: border-box; background: linear-gradient(#e6e8ea, #d9dcdf); border-bottom: 1px solid #a9adb2; }
    .logo { display: flex; align-items: center; gap: 3px; width: 87px; height: 17px; padding: 2px 0 0 5px; box-sizing: border-box; background: #909294; border-right: 5px solid #a4a6a8; color: #d9dadb; font: italic 8px/14px "Liberation Sans", sans-serif; }
    .ds { width: 13px; height: 14px; flex: none; }
    .titleTools { margin-left: 16px; }
    .pick { display: flex; height: 16px; box-sizing: border-box; width: 23px; border: 1px solid #868a91; background: #d9dce0; flex: none; margin-left: 2px; }
    .pickMain, .pickDrop { padding: 0; border: 0; background: none; display: grid; place-items: center; }
    .pickMain { width: 14px; background: #b9bdc4; border-right: 1px solid #868a91; }
    .pickDrop { flex: 1; }
    .arrow { display: block; width: 4px; height: 2px; background: #4b5057; clip-path: polygon(0 0, 100% 0, 50% 100%); }
    .doc { flex: 1; text-align: center; white-space: nowrap; padding-left: 184px; }
    .row { display: flex; align-items: center; height: 18px; overflow: hidden; background: linear-gradient(#e0e3e8, #d0d4dc); border-bottom: 1px solid #c0c4ca; box-sizing: border-box; }
    .row3 { height: 19px; padding-top: 1px; }
    .g4 { margin-left: 4px; }
    .g6 { margin-left: 6px; }
    .g8 { margin-left: 8px; }
    .fields { display: flex; margin-left: 3px; }
    .combo { position: relative; display: block; height: 12px; flex: none; }
    .combo::after { content: ""; position: absolute; right: 3px; top: 5px; width: 4px; height: 2px; background: #6d7278; clip-path: polygon(0 0, 100% 0, 50% 100%); }
    .field { appearance: none; width: 100%; height: 12px; box-sizing: border-box; margin: 0; padding: 0 3px; border: 1px solid #b9bdc3; border-radius: 0; background: #f2f3f5; color: #6b7076; font: inherit; display: block; }
    .wide { width: 102px; }
    .mid { width: 25px; }
    .small { width: 37px; }
    .small::after { display: none; }
    .body { flex: 1; display: grid; grid-template-columns: 26px 124px minmax(0, 1fr); }
    .side { display: flex; flex-direction: column; padding-top: 9px; background: linear-gradient(90deg, #dde1ea, #d3d8e2); }
    .cell { display: grid; grid-template-columns: 16px 8px; align-items: center; }
    .tool, .drop { padding: 0; border: 0; background: none; display: grid; place-items: center; height: 14px; }
    .pressed { box-sizing: border-box; background: #b3b7bf; border: 1px solid #6d727b; height: 16px; }
    .line { height: 1px; margin: 2px 2px; background: #a6aab0; }
    .dots { height: 0; margin: 6px 0; border-top: 1px dotted #5d636b; }
    .endline { height: 1px; margin-top: 3px; background: #a6aab0; }
    .panel { position: relative; display: flex; flex-direction: column; min-width: 0; background: #e1e5e8; border-right: 1px solid #6c7684; box-sizing: border-box; }
    .tabs { display: flex; height: 18px; box-sizing: border-box; padding-top: 4px; background: #dde1e8; border-bottom: 1px solid #8a8e95; }
    .tab { width: 17px; height: 13px; box-sizing: border-box; padding: 0; border: 1px solid #85898f; border-left-width: 0; background: #a9adb2; display: grid; place-items: center; }
    .on { background: #eceef1; border-bottom-color: #eceef1; }
    .more { margin-left: auto; padding: 0 2px; border: 0; background: none; font: 12px/12px "Noto Sans", sans-serif; color: #30343a; }
    .search { display: flex; align-items: center; height: 11px; box-sizing: border-box; border: 1px solid #8d9298; background: #fbfbfc; padding-left: 4px; }
    .filterIcon { width: 9px; height: 9px; }
    .query { flex: 1; min-width: 0; height: 9px; padding: 0 2px; border: 0; background: none; font: inherit; outline: none; }
    .tree { margin-top: 1px; overflow: hidden; }
    .handle { position: absolute; right: -6px; top: 283px; width: 6px; height: 24px; box-sizing: border-box; padding: 0; border: 1px solid #55606e; border-left: 0; background: radial-gradient(circle, #2c4f8d 1px, transparent 1px) 0 0 / 5px 7px, #e6e9ee; z-index: 1; }
    .scroll { display: flex; align-items: center; height: 9px; margin-top: auto; background: #eceef0; }
    .thumb { width: 66px; height: 7px; box-sizing: border-box; border: 1px solid #a2a6ab; background: linear-gradient(#f4f5f6, #cdd0d4); margin-right: auto; margin-left: 2px; display: grid; place-items: center; padding: 0; }
    .ridges { width: 5px; height: 3px; background: repeating-linear-gradient(90deg, #6d7278 0 1px, transparent 1px 2px); }
    .la, .ra { width: 8px; height: 9px; padding: 0; border: 0; background: none; display: grid; place-items: center; }
    .la::before, .ra::before { content: ""; width: 2px; height: 4px; background: #33383d; }
    .la::before { clip-path: polygon(100% 0, 100% 100%, 0 50%); }
    .ra::before { clip-path: polygon(0 0, 0 100%, 100% 50%); }
  `;

  private pick() {
    return html`<span class="pick">
      <button class="pickMain" aria-label="select"><cad-icon name="cursor"></cad-icon></button>
      <button class="pickDrop" aria-label="select options"><span class="arrow"></span></button>
    </span>`;
  }

  private sideTool(t: Tool) {
    if (t === "|") return html`<div class="line"></div>`;
    if (t === ":") return html`<div class="dots"></div>`;
    const name = t.replace(/[+*]$/, "");
    return html`<div class="cell">
      <button class=${classMap({ tool: true, pressed: t.endsWith("*") })} aria-label=${name}><cad-icon name=${name}></cad-icon></button>
      ${t.endsWith("+") ? html`<button class="drop" aria-label="${name} options"><span class="arrow"></span></button>` : nothing}
    </div>`;
  }

  render() {
    return html`
      <header class="title">
        <div class="logo">
          <svg class="ds" viewBox="0 0 13 14" fill="none" stroke="#dcdddd" stroke-width="1.3" stroke-linecap="round" aria-hidden="true">
            <path d="M3 1.500H7.500C9 3 7 4.500 4.500 5.500M4.500 5.500C8 6 5 11 1 12.500L3 8M12 5.500C9 5 8 6.500 10 8C12 10 10 12 7 12" />
          </svg>
          <span><b>SOLID</b>WORKS</span>
        </div>
        <tool-strip class="titleTools" .tools=${TITLE_TOOLS}></tool-strip>
        ${this.pick()}
        <tool-strip .tools=${TITLE_TOOLS_END}></tool-strip>
        <div class="doc">Angolo.SLDPRT *</div>
      </header>
      <div class="row">
        <tool-strip .tools=${ROW2_SKETCH}></tool-strip>
        ${this.pick()}
        <tool-strip class="g4" .tools=${ROW2_COLOR}></tool-strip>
        <tool-strip class="g8" .tools=${ROW2_VIEWS}></tool-strip>
        <tool-strip class="g6" .tools=${ROW2_ZOOM}></tool-strip>
        <tool-strip class="g4" .tools=${ROW2_SHEET}></tool-strip>
      </div>
      <div class="row row3">
        <tool-strip .tools=${ROW3_LINE}></tool-strip>
        <tool-strip class="g4" .tools=${ROW3_NOTE}></tool-strip>
        <div class="fields">
          <label class="combo wide"><select class="field" aria-label="Font"><option>Century Gothic</option></select></label>
          <label class="combo mid"><select class="field" aria-label="Size"><option>13</option></select></label>
          <label class="combo small"><input class="field" aria-label="Height" value="3.5mm" /></label>
        </div>
        <tool-strip .tools=${ROW3_FORMAT}></tool-strip>
        <tool-strip class="g6" .tools=${ROW3_ANNOT}></tool-strip>
      </div>
      <div class="body">
        <nav class="side">${SIDE_TOOLS.map((t) => this.sideTool(t))}<div class="endline"></div></nav>
        <aside class="panel">
          <div class="tabs">
            ${["part", "display", "config", "crosshair", "ball"].map(
              (n, i) => html`<button class=${classMap({ tab: true, on: this.tab === i })} aria-label=${n} @click=${() => (this.tab = i)}><cad-icon name=${n}></cad-icon></button>`
            )}
            <button class="more" aria-label="more tabs">»</button>
          </div>
          <label class="search"><cad-icon class="filterIcon" name="filter"></cad-icon><input class="query" aria-label="Filter" /></label>
          <feature-tree class="tree"></feature-tree>
          <button class="handle" aria-label="collapse panel"></button>
          <div class="scroll">
            <button class="la" aria-label="scroll left"></button>
            <button class="thumb" aria-label="scroll thumb"><span class="ridges"></span></button>
            <button class="ra" aria-label="scroll right"></button>
          </div>
        </aside>
        <model-view></model-view>
      </div>`;
  }
}
